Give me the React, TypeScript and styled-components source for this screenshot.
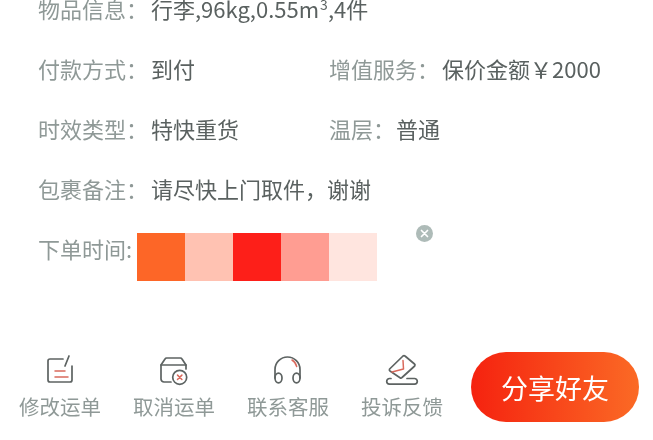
import React from 'react';
import styled, { createGlobalStyle } from 'styled-components';

const Global = createGlobalStyle`
  html, body {
    margin: 0;
    padding: 0;
    background: #fff;
    overflow: hidden;
  }
  body {
    font-family: "Noto Sans CJK SC", sans-serif;
  }
`;

const Page = styled.div`
  width: 653px;
  height: 440px;
  overflow: hidden;
  position: relative;
  display: flex;
  flex-direction: column;
  filter: blur(0.35px);
`;

const Details = styled.div`
  display: flex;
  flex-direction: column;
  margin-top: -22px;
  padding-left: 38px;
`;

const Row = styled.div`
  height: 60px;
  display: grid;
  grid-template-columns: 291px 1fr;
  align-items: center;
`;

const Field = styled.div`
  display: flex;
  align-items: center;
  font-size: 22px;
  line-height: 30px;
  white-space: nowrap;
`;

const Label = styled.span`
  color: #8f9997;
  width: 113px;
  flex-shrink: 0;
`;

const ShortLabel = styled(Label)`
  width: 67px;
`;

const TimeLabel = styled(Label)`
  width: 99px;
`;

const Value = styled.span`
  color: #5a6160;
`;

const Sup = styled.sup`
  font-size: 14px;
  line-height: 0;
  margin-left: 1px;
`;

const Mosaic = styled.div`
  display: flex;
  margin: 9px 0 -9px;
`;

const Tile = styled.div<{ $color: string }>`
  width: 48px;
  height: 48px;
  background: ${p => p.$color};
`;

const ClearButton = styled.svg`
  position: absolute;
  left: 416px;
  top: 225px;
  width: 17px;
  height: 17px;
  display: block;
  color: #aebbb8;
`;

const Footer = styled.div`
  margin-top: auto;
  height: 88px;
  margin-bottom: 9px;
  display: flex;
  align-items: center;
  padding-left: 3px;
`;

const Actions = styled.div`
  display: flex;
`;

const Action = styled.div`
  width: 114px;
  display: flex;
  flex-direction: column;
  align-items: center;
`;

const ActionIcon = styled.svg`
  width: 32px;
  height: 32px;
  display: block;
  margin: 1px 0 5px;
  overflow: visible;
`;

const ActionText = styled.span`
  color: #8f9997;
  font-size: 20.5px;
  line-height: 30px;
`;

const ShareButton = styled.div`
  margin-left: 12px;
  width: 168px;
  height: 70px;
  border-radius: 35px;
  display: flex;
  align-items: center;
  justify-content: center;
  background: linear-gradient(90deg, #f5220f 0%, #fb6a25 100%);
  color: #fff;
  font-size: 27px;
`;

const stroke = { fill: 'none', stroke: '#5d6362', strokeWidth: 1.7, strokeLinecap: 'round' as const, strokeLinejoin: 'round' as const };
const accent = { fill: 'none', stroke: '#d9695c', strokeWidth: 1.5, strokeLinecap: 'round' as const, strokeLinejoin: 'round' as const };

const EditIcon = () => (
  <ActionIcon viewBox="0 0 32 32">
    <path d="M19 5H6a2 2 0 0 0-2 2v19a2 2 0 0 0 2 2h20a2 2 0 0 0 2-2V12" {...stroke} />
    <path d="M21 12l4-10" {...stroke} />
    <path d="M11 17h10M11 23h13" {...accent} />
  </ActionIcon>
);

const CancelIcon = () => (
  <ActionIcon viewBox="0 0 32 32">
    <path d="M13 28H6a3 3 0 0 1-3-3V11l4-6a2 2 0 0 1 2-1h13a2 2 0 0 1 2 1l4 6v4" {...stroke} />
    <path d="M3 11h25" {...stroke} />
    <circle cx="21.700" cy="23.300" r="7" {...stroke} />
    <path d="M19.500 21.100l4.400 4.400M23.900 21.100l-4.400 4.400" {...accent} />
  </ActionIcon>
);

const HeadsetIcon = () => (
  <ActionIcon viewBox="0 0 32 32">
    <path d="M3 24V15.500a12.500 12.500 0 0 1 25 0V24" {...stroke} />
    <ellipse cx="6.500" cy="24" rx="3.500" ry="4.800" {...stroke} />
    <ellipse cx="24.500" cy="24" rx="3.500" ry="4.800" {...stroke} />
    <path d="M20 6q3.500 2 4.700 6.500" {...accent} />
  </ActionIcon>
);

const ComplaintIcon = () => (
  <ActionIcon viewBox="0 0 32 32">
    <path d="M17 2a1.500 1.500 0 0 1 2 0l9.500 8a1.500 1.500 0 0 1 .2 2L16 23.500a1.500 1.500 0 0 1-2 .2L4 17a1.500 1.500 0 0 1-.4-2z" {...stroke} />
    <path d="M17 6.500l.5 8.500L6 18" {...accent} />
    <path d="M5 24.500H3.500a2.800 2.800 0 0 0 0 5.600h25a2.800 2.800 0 0 0 0-5.600H21" {...stroke} />
  </ActionIcon>
);

const tiles = ['#fd6627', '#ffc2b2', '#fd1f19', '#ff9d92', '#ffe5df'];

const actions = [
  { text: '修改运单', icon: <EditIcon /> },
  { text: '取消运单', icon: <CancelIcon /> },
  { text: '联系客服', icon: <HeadsetIcon /> },
  { text: '投诉反馈', icon: <ComplaintIcon /> },
];

export default function App() {
  return (
    <Page>
      <Global />
      <Details>
        <Row>
          <Field>
            <Label>物品信息：</Label>
            <Value>行李,96kg,0.55m<Sup>3</Sup>,4件</Value>
          </Field>
        </Row>
        <Row>
          <Field>
            <Label>付款方式：</Label>
            <Value>到付</Value>
          </Field>
          <Field>
            <Label>增值服务：</Label>
            <Value>保价金额￥2000</Value>
          </Field>
        </Row>
        <Row>
          <Field>
            <Label>时效类型：</Label>
            <Value>特快重货</Value>
          </Field>
          <Field>
            <ShortLabel>温层：</ShortLabel>
            <Value>普通</Value>
          </Field>
        </Row>
        <Row>
          <Field>
            <Label>包裹备注：</Label>
            <Value>请尽快上门取件，谢谢</Value>
          </Field>
        </Row>
        <Row>
          <Field>
            <TimeLabel>下单时间:</TimeLabel>
            <Mosaic>
              {tiles.map(c => <Tile key={c} $color={c} />)}
            </Mosaic>
          </Field>
        </Row>
      </Details>
      <ClearButton viewBox="0 0 17 17">
        <circle cx="8.500" cy="8.500" r="8.500" fill="currentColor" />
        <path d="M5.500 5.500l6 6M11.500 5.500l-6 6" stroke="#fff" strokeWidth="1.700" strokeLinecap="round" />
      </ClearButton>
      <Footer>
        <Actions>
          {actions.map(a => (
            <Action key={a.text}>
              {a.icon}
              <ActionText>{a.text}</ActionText>
            </Action>
          ))}
        </Actions>
        <ShareButton>分享好友</ShareButton>
      </Footer>
    </Page>
  );
}
